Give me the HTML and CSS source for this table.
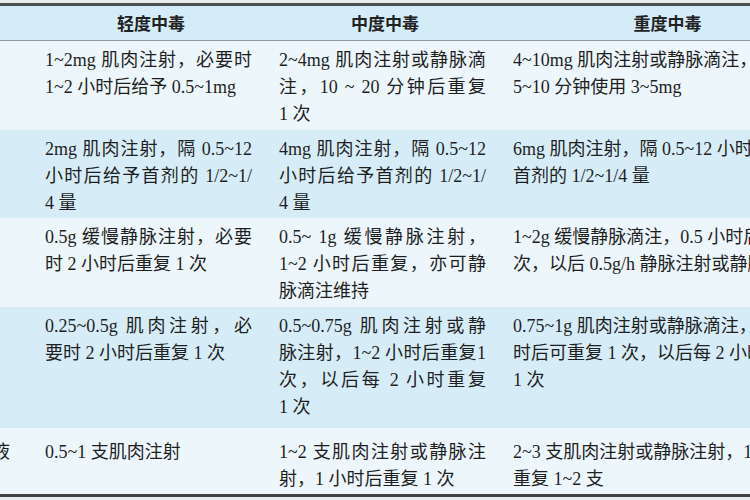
FILE: index.html
```html
<!DOCTYPE html>
<html lang="zh">
<head>
<meta charset="utf-8">
<title>解毒剂用法</title>
<link rel="stylesheet" href="styles.css">
</head>
<body>
<div class="page">
<table class="dose">
<colgroup>
<col class="c1"><col class="c2"><col class="c3"><col class="c4">
</colgroup>
<thead>
<tr class="head">
<th></th><th>轻度中毒</th><th>中度中毒</th><th>重度中毒</th>
</tr>
</thead>
<tbody>
<tr class="r1 light">
<td></td>
<td><div class="j">1~2mg 肌肉注射，必要时</div><div>1~2 小时后给予 0.5~1mg</div></td>
<td><div class="j">2~4mg 肌肉注射或静脉滴</div><div class="j">注，10 ~ 20 分钟后重复</div><div>1 次</div></td>
<td><div class="n">4~10mg 肌肉注射或静脉滴注，每</div><div class="n">5~10 分钟使用 3~5mg</div></td>
</tr>
<tr class="r2 blue">
<td></td>
<td><div class="j">2mg 肌肉注射，隔 0.5~12</div><div class="j">小时后给予首剂的 1/2~1/</div><div>4 量</div></td>
<td><div class="j">4mg 肌肉注射，隔 0.5~12</div><div class="j">小时后给予首剂的 1/2~1/</div><div>4 量</div></td>
<td><div class="n">6mg 肌肉注射，隔 0.5~12 小时后给予</div><div class="n">首剂的 1/2~1/4 量</div></td>
</tr>
<tr class="r3 light">
<td></td>
<td><div class="j">0.5g 缓慢静脉注射，必要</div><div>时 2 小时后重复 1 次</div></td>
<td><div class="j">0.5~ 1g 缓慢静脉注射，</div><div class="j">1~2 小时后重复，亦可静</div><div>脉滴注维持</div></td>
<td><div class="n">1~2g 缓慢静脉滴注，0.5 小时后重复</div><div class="n">次，以后 0.5g/h 静脉注射或静脉滴注</div></td>
</tr>
<tr class="r4 blue">
<td></td>
<td><div class="j">0.25~0.5g 肌肉注射，必</div><div>要时 2 小时后重复 1 次</div></td>
<td><div class="j">0.5~0.75g 肌肉注射或静</div><div class="j">脉注射，1~2 小时后重复1</div><div class="j">次，以后每 2 小时重复</div><div>1 次</div></td>
<td><div class="n">0.75~1g 肌肉注射或静脉滴注，1 小</div><div class="n">时后可重复 1 次，以后每 2 小时</div><div class="n">1 次</div></td>
</tr>
<tr class="r5 light">
<td><div class="cut">液</div></td>
<td><div>0.5~1 支肌肉注射</div></td>
<td><div class="j">1~2 支肌肉注射或静脉注</div><div>射，1 小时后重复 1 次</div></td>
<td><div class="n">2~3 支肌肉注射或静脉注射，1 小时后</div><div class="n">重复 1~2 支</div></td>
</tr>
</tbody>
</table>
</div>
</body>
</html>
```
FILE: styles.css
```css
html, body {
  margin: 0;
  padding: 0;
  background: #c9cccd;
  overflow: hidden;
}
.page {
  width: 750px;
  height: 500px;
  overflow: hidden;
  padding-top: 3px;
  background: #e9eced;
  box-sizing: border-box;
}
.dose {
  width: 833px;
  table-layout: fixed;
  border-collapse: collapse;
  border-top: 3px solid #4d4f50;
  border-bottom: 3px solid #3e4142;
  font-family: "Liberation Serif", "Noto Sans CJK SC", serif;
  font-size: 18px;
  color: #1f1f1f;
}
.c1 { width: 34px; }
.c2 { width: 234px; }
.c3 { width: 234px; }
.c4 { width: 331px; }
.head th {
  height: 34px;
  padding: 0;
  background: #d3ecf8;
  border-bottom: 1px solid #8d9ea6;
  font-family: "Noto Sans CJK SC", sans-serif;
  font-size: 17px;
  font-weight: bold;
  text-align: center;
  color: #222;
  line-height: 34px;
}
.dose td {
  vertical-align: top;
  padding: 6px 16px 0 11px;
  line-height: 27px;
  overflow: hidden;
}
.dose td:first-child {
  padding: 6px 0 0 0;
}
.light td { background: #edf6fb; }
.blue td { background: #d6edf8; }
.r1 td { height: 83px; }
.r2 td { height: 82px; }
.r3 td { height: 83px; }
.r4 td { height: 115px; }
.r5 td { height: 55px; padding-top: 11px; }
.dose .r5 td:first-child { padding-top: 11px; }
.j {
  text-align: justify;
  text-align-last: justify;
}
.n {
  white-space: nowrap;
}
.cut {
  margin-left: -8px;
  white-space: nowrap;
}
.dose td div {
  white-space: nowrap;
}
```
